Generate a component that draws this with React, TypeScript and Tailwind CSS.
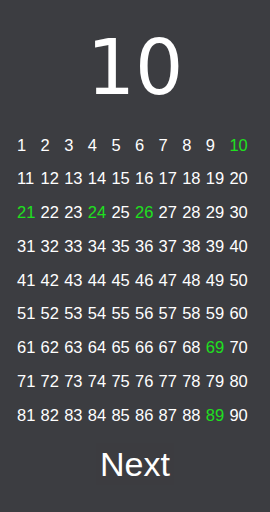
import React from 'react';

const GREEN = new Set([10, 21, 24, 26, 69, 89]);

export default function App() {
  const nums = Array.from({ length: 90 }, (_, i) => i + 1);

  return (
    <div className="w-full h-[512px] bg-[#3c3d41] flex flex-col items-center overflow-hidden font-['Liberation_Sans',Arial,sans-serif]">
      {/* current number */}
      <div className="mt-[24px] h-[88px] flex items-center text-white text-[76px] leading-none font-['DejaVu_Sans',sans-serif]">
        10
      </div>

      {/* board */}
      <div className="mt-[16px] w-full pl-[17px] pr-[17px] grid grid-cols-10 text-[16.5px]">
        {nums.map(n => (
          <span
            key={n}
            className={`h-[33.75px] flex items-center ${GREEN.has(n) ? 'text-[#1fe01f]' : 'text-white'}`}
          >
            {n}
          </span>
        ))}
      </div>

      <button className="mt-[11px] text-white text-[34px] leading-none px-1 py-1 bg-[#3c3c40]">
        Next
      </button>
    </div>
  );
}
